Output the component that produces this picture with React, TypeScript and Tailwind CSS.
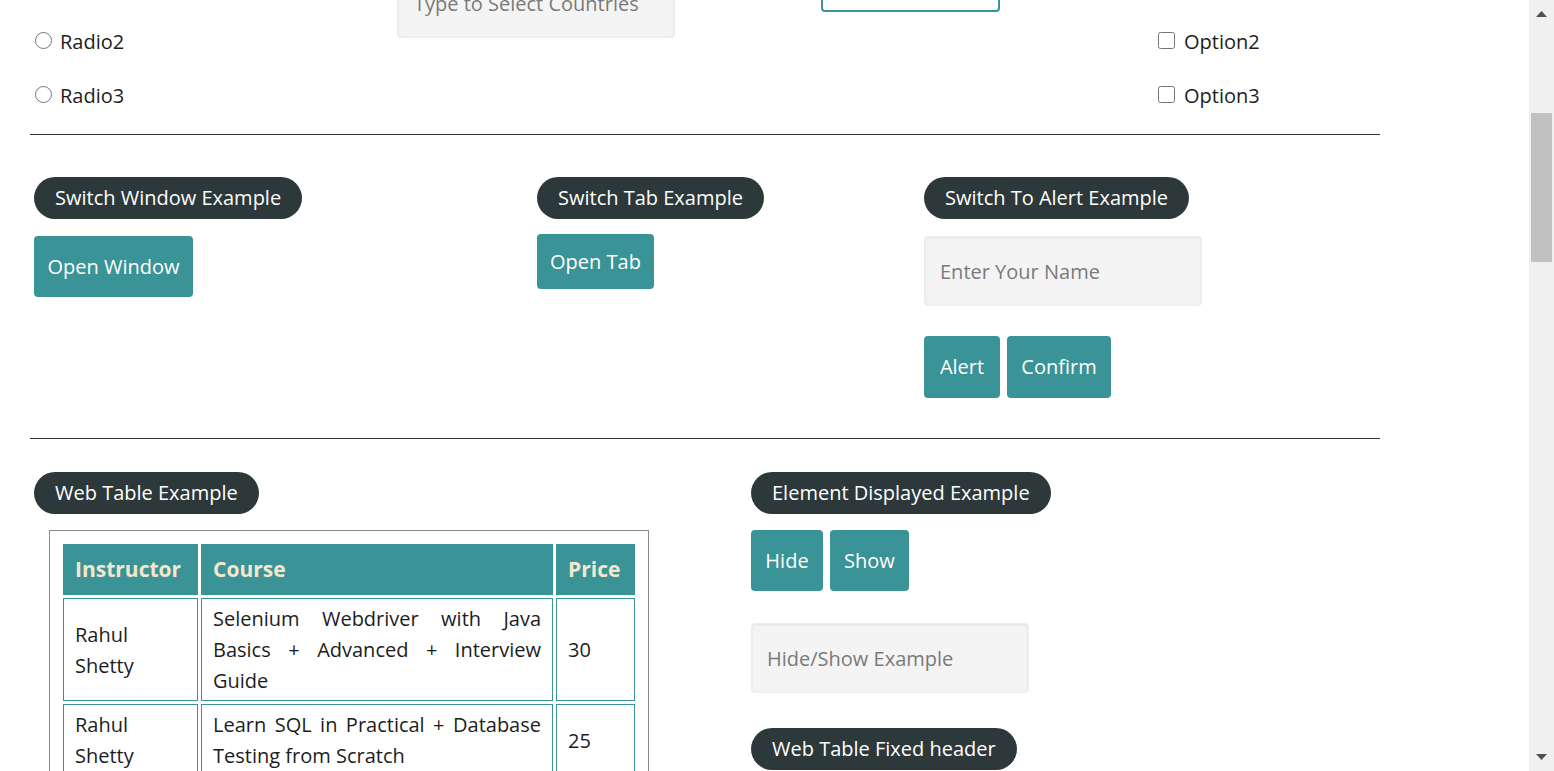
import React from 'react';

const font = "[font-family:'Open_Sans',sans-serif]";

function Legend({ children }: { children: React.ReactNode }) {
  return (
    <span className="inline-flex h-[42px] items-center whitespace-nowrap rounded-full bg-[#2c3839] px-[21px] text-[20px] text-white">
      {children}
    </span>
  );
}

function TealButton({ children, className = '' }: { children: React.ReactNode; className?: string }) {
  return (
    <button className={`flex items-center justify-center rounded-[4px] bg-[#3a9396] text-[20px] text-white ${className}`}>
      {children}
    </button>
  );
}

function GreyInput({ placeholder, className = '' }: { placeholder: string; className?: string }) {
  return (
    <input
      placeholder={placeholder}
      className={`h-[70px] w-[278px] rounded-[4px] border border-[#ececec] bg-[#f4f4f4] px-[15px] text-[20px] text-[#333] shadow-[inset_0_1px_3px_rgba(0,0,0,0.08)] outline-none placeholder:text-[#7a7a7a] ${className}`}
    />
  );
}

const rows = [
  { instructor: 'Rahul Shetty', course: 'Selenium Webdriver with Java Basics + Advanced + Interview Guide', price: '30' },
  { instructor: 'Rahul Shetty', course: 'Learn SQL in Practical + Database Testing from Scratch', price: '25' },
  { instructor: 'Rahul Shetty', course: 'Appium (Selenium) - Mobile Automation Testing from Scratch', price: '30' },
];

export default function App() {
  return (
    <div className={`flex h-[771px] w-full overflow-hidden bg-white text-[#1d1d1d] ${font}`}>
      {/* page content, scrolled down */}
      <div className="flex-1 overflow-hidden">
        <div className="-mt-[41px] w-[1380px] pl-[30px]">
          {/* radio / autocomplete / dropdown / checkbox row */}
          <div className="flex items-start">
            <div className="w-[367px] pl-[5px]">
              {['Radio1', 'Radio2', 'Radio3'].map((r) => (
                <label key={r} className="flex h-[54px] items-center gap-[8px] text-[20px]">
                  <input type="radio" name="radio" className="m-0 h-[17px] w-[17px]" />
                  <span className="pt-[3px]">{r}</span>
                </label>
              ))}
            </div>
            <div className="w-[424px] pt-[9px]">
              <GreyInput placeholder="Type to Select Countries" className="pl-[16px]" />
            </div>
            <div className="w-[337px] pt-[7px]">
              <div className="h-[46px] w-[179px] rounded-[4px] border-2 border-[#3a9396]" />
            </div>
            <div>
              {['Option1', 'Option2', 'Option3'].map((o) => (
                <label key={o} className="flex h-[54px] items-center gap-[9px] text-[20px]">
                  <input type="checkbox" className="m-0 h-[17px] w-[17px]" />
                  <span className="pt-[3px]">{o}</span>
                </label>
              ))}
            </div>
          </div>

          <hr className="mt-[13px] border-t border-[#333]" />

          {/* switch window / tab / alert */}
          <div className="flex items-start pl-[4px] pt-[42px]">
            <div className="w-[503px]">
              <Legend>Switch Window Example</Legend>
              <TealButton className="mt-[17px] h-[61px] w-[159px]">Open Window</TealButton>
            </div>
            <div className="w-[387px]">
              <Legend>Switch Tab Example</Legend>
              <TealButton className="mt-[15px] h-[55px] w-[117px]">Open Tab</TealButton>
            </div>
            <div>
              <Legend>Switch To Alert Example</Legend>
              <GreyInput placeholder="Enter Your Name" className="mt-[17px] block" />
              <div className="mt-[30px] flex gap-[7px]">
                <TealButton className="h-[62px] w-[76px]">Alert</TealButton>
                <TealButton className="h-[62px] w-[104px]">Confirm</TealButton>
              </div>
            </div>
          </div>

          <hr className="mt-[40px] border-t border-[#333]" />

          {/* web table / element displayed */}
          <div className="flex items-start pl-[4px] pt-[33px]">
            <div className="w-[717px]">
              <Legend>Web Table Example</Legend>
              <div className="ml-[15px] mt-[16px] w-[600px] border border-[#8a8a8a] p-[10px]">
                <table className="w-[578px] table-fixed border-separate border-spacing-[3px] text-[20px]">
                  <thead>
                    <tr className="h-[51px] bg-[#3a9396] text-left text-[21px] font-bold text-[#f6e7cb]">
                      <th className="w-[135px] px-[12px]">Instructor</th>
                      <th className="w-[352px] px-[12px]">Course</th>
                      <th className="w-[79px] px-[12px]">Price</th>
                    </tr>
                  </thead>
                  <tbody>
                    {rows.map((r, i) => (
                      <tr key={i}>
                        <td className="border border-[#3a9396] px-[11px] py-[4px] leading-[31px]">{r.instructor}</td>
                        <td className="border border-[#3a9396] px-[11px] py-[4px] text-justify leading-[31px]">{r.course}</td>
                        <td className="border border-[#3a9396] px-[11px] py-[4px] leading-[31px]">{r.price}</td>
                      </tr>
                    ))}
                  </tbody>
                </table>
              </div>
            </div>
            <div>
              <Legend>Element Displayed Example</Legend>
              <div className="mt-[16px] flex gap-[7px]">
                <TealButton className="h-[61px] w-[72px]">Hide</TealButton>
                <TealButton className="h-[61px] w-[79px]">Show</TealButton>
              </div>
              <GreyInput placeholder="Hide/Show Example" className="mt-[32px] block" />
              <div className="mt-[35px]">
                <Legend>Web Table Fixed header</Legend>
              </div>
            </div>
          </div>
        </div>
      </div>

      {/* scrollbar */}
      <div className="flex h-full w-[25px] flex-col items-center bg-[#f0f0f0]">
        <div className="flex h-[17px] items-end justify-center">
          <svg width="11" height="6" viewBox="0 0 11 6">
            <path d="M5.5 0L11 6H0z" fill="#505050" />
          </svg>
        </div>
        <div className="mt-[96px] h-[149px] w-[21px] bg-[#c1c1c1]" />
        <div className="flex-1" />
        <div className="flex h-[17px] items-start justify-center">
          <svg width="11" height="6" viewBox="0 0 11 6">
            <path d="M0 0H11L5.5 6z" fill="#505050" />
          </svg>
        </div>
      </div>
    </div>
  );
}
